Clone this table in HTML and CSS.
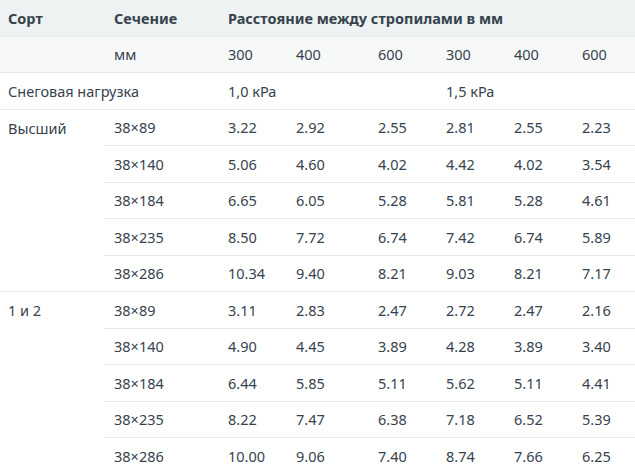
FILE: index.html
```html
<!DOCTYPE html>
<html lang="ru">
<head>
<meta charset="utf-8">
<link rel="stylesheet" href="styles.css">
</head>
<body>
<table class="spec">
  <colgroup>
    <col class="c1"><col class="c2"><col class="c3"><col class="c4"><col class="c5"><col class="c6"><col class="c7"><col class="c8">
  </colgroup>
  <thead>
    <tr class="head">
      <th>Сорт</th><th>Сечение</th><th colspan="6">Расстояние между стропилами в мм</th>
    </tr>
    <tr class="sub">
      <td></td><td>мм</td><td>300</td><td>400</td><td>600</td><td>300</td><td>400</td><td>600</td>
    </tr>
  </thead>
  <tbody>
    <tr><td colspan="2">Снеговая нагрузка</td><td colspan="3">1,0 кРа</td><td colspan="3">1,5 кРа</td></tr>
    <tr><td rowspan="5">Высший</td><td>38×89</td><td>3.22</td><td>2.92</td><td>2.55</td><td>2.81</td><td>2.55</td><td>2.23</td></tr>
    <tr><td>38×140</td><td>5.06</td><td>4.60</td><td>4.02</td><td>4.42</td><td>4.02</td><td>3.54</td></tr>
    <tr><td>38×184</td><td>6.65</td><td>6.05</td><td>5.28</td><td>5.81</td><td>5.28</td><td>4.61</td></tr>
    <tr><td>38×235</td><td>8.50</td><td>7.72</td><td>6.74</td><td>7.42</td><td>6.74</td><td>5.89</td></tr>
    <tr><td>38×286</td><td>10.34</td><td>9.40</td><td>8.21</td><td>9.03</td><td>8.21</td><td>7.17</td></tr>
    <tr><td rowspan="5">1 и 2</td><td>38×89</td><td>3.11</td><td>2.83</td><td>2.47</td><td>2.72</td><td>2.47</td><td>2.16</td></tr>
    <tr><td>38×140</td><td>4.90</td><td>4.45</td><td>3.89</td><td>4.28</td><td>3.89</td><td>3.40</td></tr>
    <tr><td>38×184</td><td>6.44</td><td>5.85</td><td>5.11</td><td>5.62</td><td>5.11</td><td>4.41</td></tr>
    <tr><td>38×235</td><td>8.22</td><td>7.47</td><td>6.38</td><td>7.18</td><td>6.52</td><td>5.39</td></tr>
    <tr><td>38×286</td><td>10.00</td><td>9.06</td><td>7.40</td><td>8.74</td><td>7.66</td><td>6.25</td></tr>
  </tbody>
</table>
</body>
</html>
```
FILE: styles.css
```css
html, body {
  margin: 0;
  padding: 0;
  background: #ffffff;
}
body {
  font-family: "Noto Sans", "Open Sans", sans-serif;
  font-size: 14.5px;
  color: #36434e;
}
.spec {
  width: 635px;
  border-collapse: collapse;
  table-layout: fixed;
}
.c1 { width: 104px; }
.c2 { width: 114px; }
.c3 { width: 68px; }
.c4 { width: 82px; }
.c5 { width: 68px; }
.c6 { width: 68px; }
.c7 { width: 68px; }
.c8 { width: 63px; }
.spec th, .spec td {
  height: 35.5px;
  padding: 0 0 0 10px;
  text-align: left;
  vertical-align: middle;
  border-bottom: 1px solid #e7eaeb;
  white-space: nowrap;
  line-height: 20px;
}
.spec tr > :first-child[rowspan],
.spec tbody tr:first-child > :first-child,
.spec thead th:first-child {
  padding-left: 8px;
}
.spec td[rowspan] {
  vertical-align: top;
  padding-top: 8px;
}
.head th {
  background: #eef2f2;
  font-weight: 700;
  color: #36434d;
}
.sub td {
  background: #f7f8f8;
}
```
